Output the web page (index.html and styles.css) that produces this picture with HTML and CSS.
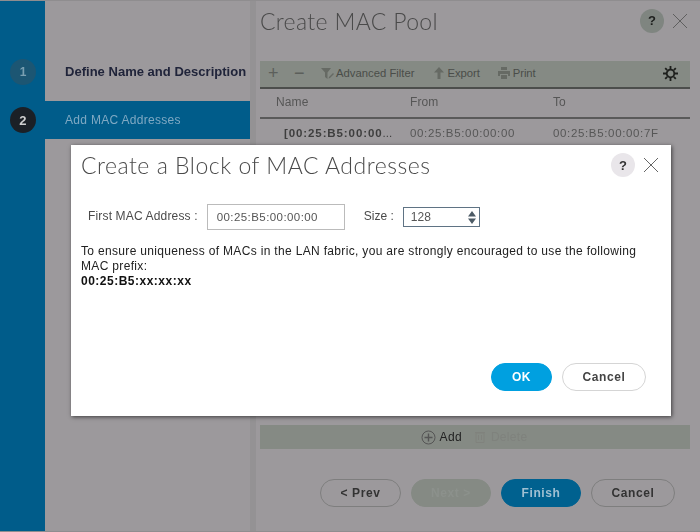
FILE: index.html
```html
<!DOCTYPE html>
<html lang="en">
<head>
<meta charset="utf-8">
<title>Create MAC Pool</title>
<link rel="stylesheet" href="styles.css">
</head>
<body>
<div class="wizard">
  <nav class="steps">
    <div class="step step-done">
      <span class="badge badge-done">1</span>
      <span class="step-label">Define Name and Description</span>
    </div>
    <div class="step step-active">
      <span class="badge badge-active">2</span>
      <span class="step-label">Add MAC Addresses</span>
    </div>
  </nav>
  <main class="main">
    <header class="head">
      <h1 class="title">Create MAC Pool</h1>
      <span class="help help-dim">?</span>
      <svg class="close" width="16" height="16" viewBox="0 0 16 16"><path d="M1 1 15 15M15 1 1 15" stroke="#5f5f5f" stroke-width="1" fill="none"/></svg>
    </header>
    <div class="toolbar">
      <span class="tool-sign">+</span>
      <span class="tool-sign tool-minus">−</span>
      <span class="tool tool-filter">
        <svg width="14" height="13" viewBox="0 0 14 13"><path d="M0 1h10L6.500 5.500V12L4 10V5.500Z" fill="#666a64"/><path d="M8 10l4-4 1 1-4 4-1.500.5Z" fill="#666a64"/></svg>
        Advanced Filter
      </span>
      <span class="tool tool-export">
        <svg width="10" height="12" viewBox="0 0 10 12"><path d="M5 0l5 5.500H6.500V12h-3V5.500H0Z" fill="#666a64"/></svg>
        Export
      </span>
      <span class="tool tool-print">
        <svg width="12" height="12" viewBox="0 0 12 12"><path d="M3 0h6v3H3ZM0 4h12v5H10V7H2v2H0ZM3 8h6v4H3Z" fill="#666a64"/></svg>
        Print
      </span>
      <svg class="gear" width="15" height="15" viewBox="0 0 15 15"><circle cx="7.500" cy="7.500" r="3.800" fill="none" stroke="#1d1f1c" stroke-width="1.800"/><path d="M7.500 0v3M7.500 12v3M0 7.500h3M12 7.500h3M2.200 2.200l2 2M10.800 10.800l2 2M12.800 2.200l-2 2M4.200 10.800l-2 2" stroke="#1d1f1c" stroke-width="1.800"/></svg>
    </div>
    <div class="grid grid-head">
      <span class="cell-name">Name</span><span>From</span><span>To</span>
    </div>
    <div class="grid grid-row">
      <span class="cell-name cell-pool">[00:25:B5:00:00<i class="more">...</i></span><span>00:25:B5:00:00:00</span><span>00:25:B5:00:00:7F</span>
    </div>
    <div class="spacer"></div>
    <div class="addbar">
      <span class="add">
        <svg width="15" height="15" viewBox="0 0 15 15"><circle cx="7.500" cy="7.500" r="6.500" fill="none" stroke="#555" stroke-width="1"/><path d="M7.500 3.500v8M3.500 7.500h8" stroke="#555" stroke-width="1.400"/></svg>
        Add
      </span>
      <span class="delete">
        <svg width="10" height="12" viewBox="0 0 10 12"><path d="M1 2h8v9.500H1ZM0 1.500h10M3.500 4v5M6.500 4v5" fill="none" stroke="#80827d" stroke-width="1"/></svg>
        Delete
      </span>
    </div>
    <footer class="actions">
      <button class="btn btn-ghost">&lt; Prev</button>
      <button class="btn btn-disabled">Next &gt;</button>
      <button class="btn btn-finish">Finish</button>
      <button class="btn btn-ghost btn-wide">Cancel</button>
    </footer>
  </main>
</div>

<section class="dialog">
  <header class="dialog-head">
    <h2 class="dialog-title">Create a Block of MAC Addresses</h2>
    <span class="help">?</span>
    <svg class="close" width="16" height="16" viewBox="0 0 16 16"><path d="M1 1 15 15M15 1 1 15" stroke="#666" stroke-width="1" fill="none"/></svg>
  </header>
  <div class="form-row">
    <label class="label">First MAC Address :</label>
    <span class="input input-mac">00:25:B5:00:00:00</span>
    <label class="label label-size">Size :</label>
    <span class="input input-size">128
      <svg class="spinner" width="8" height="13" viewBox="0 0 8 13"><path d="M4 0 8 5.500H0ZM4 13 0 7.500h8Z" fill="#4d5b66"/></svg>
    </span>
  </div>
  <p class="note">To ensure uniqueness of MACs in the LAN fabric, you are strongly encouraged to use the following MAC prefix:<br><b>00:25:B5:xx:xx:xx</b></p>
  <footer class="dialog-actions">
    <button class="btn btn-ok">OK</button>
    <button class="btn btn-cancel">Cancel</button>
  </footer>
</section>
</body>
</html>
```
FILE: styles.css
```css
* { box-sizing: border-box; }
html, body { margin: 0; height: 532px; overflow: hidden; }
body { font-family: "Liberation Sans", Arial, sans-serif; font-size: 12px; background: #9c999c; color: #4c4c4c; filter: blur(.4px); }

.wizard { display: flex; height: 532px; border-top: 1px solid #8f8d8f; border-bottom: 1px solid #8f8d8f; }

.steps { width: 250px; flex: none; padding-top: 42px; background: linear-gradient(90deg, #005c8a 45px, #9c999c 45px); }
.step { display: flex; align-items: center; gap: 29px; padding-left: 10px; }
.step-done { height: 58px; }
.step-active { height: 38px; background: #005c8a; color: #7fa9c3; letter-spacing: .3px; }
.step-done .step-label { font-weight: 700; color: #20243a; font-size: 13px; margin-bottom: 2px; letter-spacing: .02px; }
.badge { width: 26px; height: 26px; border-radius: 50%; display: flex; align-items: center; justify-content: center; font-weight: 700; font-size: 12px; flex: none; }
.badge-done { background: #1c5673; color: #7a9fb1; }
.badge-active { background: #1b2026; color: #cfcfcf; font-size: 13px; }

.main { flex: 1; min-width: 0; border-left: 6px solid #949294; padding: 0 10px 0 4px; display: flex; flex-direction: column; }
.head { display: flex; align-items: center; height: 60px; padding: 0 2px 21px 0; }
.title { flex: 1; margin: 0; font-family: Lato, sans-serif; font-weight: 300; font-size: 23px; color: #4a4a4a; letter-spacing: .35px; }
.help { width: 24px; height: 24px; border-radius: 50%; background: #e9e6ea; color: #333; font-weight: 700; font-size: 13px; display: flex; align-items: center; justify-content: center; flex: none; }
.help-dim { background: #7f8580; color: #1d1f1c; margin-right: 8px; }
.close { flex: none; }

.toolbar { display: flex; align-items: center; height: 28px; padding: 0 12px 2px 8px; background: #858a84; border-bottom: 2px solid #4c4e4c; color: #4a4d49; font-size: 11.300px; }
.tool-sign { font-size: 18px; width: 26px; color: #5c5f5b; line-height: 1; }
.tool-minus { width: 27px; }
.tool { display: flex; align-items: center; }
.tool-filter { gap: 1px; margin-right: 19px; }
.tool-export { gap: 4px; margin-right: 18px; letter-spacing: -.05px; }
.tool-print { gap: 3px; letter-spacing: -.1px; }
.gear { margin-left: auto; }

.grid { display: grid; grid-template-columns: 134px 143px 1fr; align-items: center; padding-left: 16px; color: #565656; }
.grid-head { height: 30px; padding-bottom: 2px; border-bottom: 2px solid #5a5a5a; font-size: 12px; letter-spacing: .1px; }
.grid-row { height: 27px; font-size: 11.500px; letter-spacing: .65px; }
.cell-pool { font-weight: 700; padding-left: 8px; color: #3e3e3e; white-space: nowrap; letter-spacing: .9px; }
.more { font-style: normal; font-weight: 400; letter-spacing: 0; }

.spacer { flex: 1; }
.addbar { display: flex; justify-content: center; align-items: center; gap: 13px; height: 24px; padding-right: 2px; background: #858a84; flex: none; color: #222; }
.add, .delete { display: flex; align-items: center; gap: 4px; letter-spacing: .3px; }
.delete { color: #7f827d; gap: 6px; }

.actions { display: flex; justify-content: flex-end; gap: 10px; margin-top: 30px; margin-bottom: 24px; padding-right: 15px; }
.btn { height: 28px; width: 80px; border-radius: 14px; font: 700 12px "Liberation Sans", Arial, sans-serif; letter-spacing: .6px; border: 1px solid #7e7e7e; background: transparent; color: #333; padding: 0; }
.btn-ghost { width: 81px; }
.btn-wide { width: 84px; }
.btn-disabled { background: #858a84; border-color: #858a84; color: #8c918c; }
.btn-finish { background: #00618f; border-color: #00618f; color: #9fc0d2; }

.dialog { position: absolute; left: 71px; top: 145px; width: 600px; height: 271px; background: #fff; box-shadow: 1px 1px 4px rgba(0,0,0,.6); display: flex; flex-direction: column; padding: 0 12px 25px 10px; }
.dialog-head { display: flex; align-items: center; height: 40px; gap: 8px; }
.dialog-title { flex: 1; margin: 0; font-family: Lato, sans-serif; font-weight: 300; font-size: 23px; letter-spacing: .52px; color: #4a4a4a; }
.form-row { display: flex; align-items: center; margin-top: 19px; padding-left: 7px; color: #4a4a4a; }
.label { letter-spacing: .16px; margin-bottom: 2px; }
.input { display: flex; align-items: center; border: 1px solid #bbb; height: 26px; margin-left: 9px; padding-left: 9px; letter-spacing: .42px; color: #555; font-size: 11.500px; }
.input-mac { width: 138px; }
.label-size { margin-left: 19px; letter-spacing: 0; }
.input-size { width: 77px; height: 20px; padding-left: 7px; border-color: #5f7384; font-size: 12px; justify-content: space-between; padding-right: 3px; letter-spacing: .1px; }
.note { margin: 14px 0 0; line-height: 15px; color: #222; letter-spacing: .33px; }
.note b { color: #111; letter-spacing: .5px; }
.dialog-actions { margin-top: auto; display: flex; justify-content: flex-end; gap: 10px; padding-right: 13px; }
.btn-ok { width: 61px; background: #00a0e0; border-color: #00a0e0; color: #fff; }
.btn-cancel { width: 84px; border-color: #d5d5d5; background: #fff; color: #444; }
```
